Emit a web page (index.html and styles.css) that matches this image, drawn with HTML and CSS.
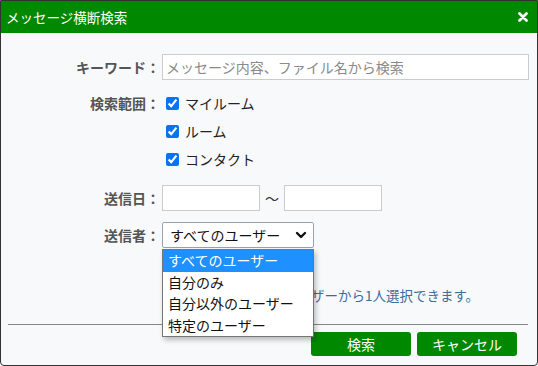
FILE: index.html
```html
<!DOCTYPE html>
<html lang="ja">
<head>
  <meta charset="UTF-8" />
  <meta name="viewport" content="width=device-width, initial-scale=1.0"/>
  <title>メッセージ横断検索</title>
  <link rel="stylesheet" href="styles.css">
</head>
<body>
  <div class="dialog">
    <div class="dialog-header">
      <span class="dialog-title">メッセージ横断検索</span>
      <button class="close-btn" aria-label="閉じる">
        <svg width="10" height="10" viewBox="0 0 10 10">
          <path d="M1.5 1.5 L8.5 8.5 M8.5 1.5 L1.5 8.5" stroke="#fff" stroke-width="2.7" stroke-linecap="round"/>
        </svg>
      </button>
    </div>

    <div class="dialog-body">
      <div class="form-row">
        <label class="form-label" for="keyword">キーワード：</label>
        <input id="keyword" class="text-input keyword-input" type="text" placeholder="メッセージ内容、ファイル名から検索">
      </div>

      <div class="form-row row-range">
        <span class="form-label">検索範囲：</span>
        <div class="check-list">
          <label class="check-item"><input type="checkbox" checked><span>マイルーム</span></label>
          <label class="check-item"><input type="checkbox" checked><span>ルーム</span></label>
          <label class="check-item"><input type="checkbox" checked><span>コンタクト</span></label>
        </div>
      </div>

      <div class="form-row row-date">
        <span class="form-label">送信日：</span>
        <div class="date-range">
          <input class="text-input date-input" type="text">
          <span class="tilde">～</span>
          <input class="text-input date-input" type="text">
        </div>
      </div>

      <div class="form-row row-sender">
        <span class="form-label">送信者：</span>
        <div class="select-wrap">
          <div class="select-box">
            <span>すべてのユーザー</span>
            <svg width="12" height="8" viewBox="0 0 12 8">
              <path d="M2 2 L6 6 L10 2" fill="none" stroke="#111" stroke-width="2.4" stroke-linecap="round" stroke-linejoin="round"/>
            </svg>
          </div>
          <ul class="select-menu">
            <li class="selected">すべてのユーザー</li>
            <li>自分のみ</li>
            <li>自分以外のユーザー</li>
            <li>特定のユーザー</li>
          </ul>
        </div>
      </div>

      <div class="form-row row-note">
        <span></span>
        <p class="note">特定のユーザーは、ユーザーから1人選択できます。</p>
      </div>
    </div>

    <hr class="divider">

    <div class="dialog-footer">
      <button class="btn">検索</button>
      <button class="btn">キャンセル</button>
    </div>
  </div>
</body>
</html>
```

FILE: styles.css
```css
* { box-sizing: border-box; }
body {
  margin: 0;
  font-family: "Noto Sans CJK JP", "Noto Sans", sans-serif;
  font-size: 14px;
  background-color: #ffffff;
}
.dialog {
  width: 538px;
  height: 366px;
  border: 1px solid #333;
  border-radius: 0 0 4px 4px;
  background-color: #f8f9fb;
  display: flex;
  flex-direction: column;
}
.dialog-header {
  height: 32px;
  background-color: #008800;
  display: flex;
  align-items: center;
  justify-content: space-between;
  padding: 0 9px 0 5px;
}
.dialog-title {
  color: #fff;
  font-size: 13.5px;
  line-height: 32px;
}
.close-btn {
  background: none;
  border: none;
  padding: 0;
  display: flex;
  cursor: pointer;
}
.dialog-body {
  padding: 21px 8px 0 7px;
}
.form-row {
  display: grid;
  grid-template-columns: 152px 1fr;
  column-gap: 2px;
  align-items: center;
}
.form-label {
  text-align: right;
  font-weight: 700;
  color: #555;
  line-height: 26px;
}
.text-input {
  height: 26px;
  border: 1px solid #ccc;
  background: #fff;
  padding: 0 3px;
  font-family: inherit;
  font-size: 14px;
  outline: none;
}
.keyword-input::placeholder { color: #8a8a8a; }
.row-range {
  margin-top: 9px;
  align-items: start;
}
.row-range .form-label { line-height: 28px; }
.check-list {
  display: flex;
  flex-direction: column;
}
.check-item {
  display: flex;
  align-items: center;
  height: 28px;
  color: #222;
}
.check-item input {
  margin: 0 6px 0 4px;
  width: 13px;
  height: 13px;
  accent-color: #0a74f0;
}
.row-date { margin-top: 12px; }
.date-range {
  display: flex;
  align-items: center;
}
.date-input { width: 98px; }
.tilde {
  margin: 0 5px;
  color: #333;
}
.row-sender { margin-top: 11px; }
.select-wrap {
  position: relative;
  width: 152px;
}
.select-box {
  height: 26px;
  border: 1px solid #9aa3ad;
  border-radius: 2px;
  background: #fff;
  display: flex;
  align-items: center;
  justify-content: space-between;
  padding: 0 6px 0 7px;
  color: #111;
}
.select-menu {
  position: absolute;
  top: 27px;
  left: 0;
  width: 152px;
  margin: 0;
  padding: 0;
  list-style: none;
  background: #fff;
  border: 1px solid #767676;
  box-shadow: 2px 3px 5px rgba(0,0,0,0.25);
  z-index: 5;
}
.select-menu li {
  height: 21.5px;
  line-height: 21.5px;
  padding-left: 5px;
  color: #111;
  white-space: nowrap;
}
.select-menu li.selected {
  background-color: #1e90ff;
  color: #fff;
}
.row-note { margin-top: 36px; }
.note {
  margin: 0;
  padding-left: 1px;
  font-size: 13.5px;
  line-height: 22px;
  color: #3d6c9c;
  white-space: nowrap;
}
.divider {
  margin: 18px 9px 0 7px;
  border: none;
  border-top: 1px solid #888;
}
.dialog-footer {
  display: flex;
  justify-content: flex-end;
  gap: 6px;
  padding: 7px 20px 0 0;
}
.btn {
  width: 100px;
  height: 24px;
  border: none;
  border-radius: 3px;
  background-color: #008800;
  color: #fff;
  font-family: inherit;
  font-size: 14px;
  cursor: pointer;
}
```
